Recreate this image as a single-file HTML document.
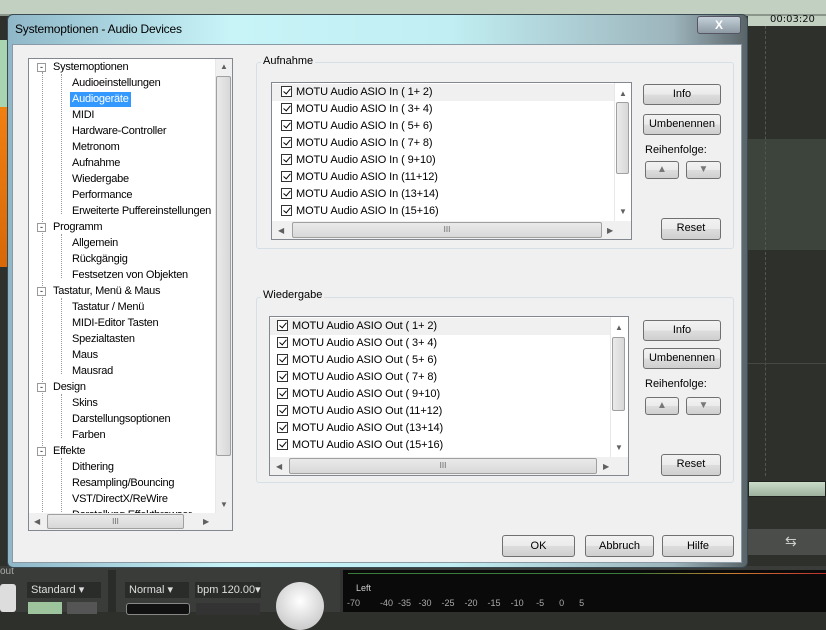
<!DOCTYPE html>
<html><head><meta charset="utf-8">
<style>
*{box-sizing:border-box;margin:0;padding:0}
body{width:826px;height:612px;overflow:hidden;position:relative;background:#2e302c;font-family:"Liberation Sans",sans-serif;font-size:11px;color:#000}
.a{position:absolute}
.btn{position:absolute;border:1px solid #707070;border-radius:3px;background:linear-gradient(#f2f2f2 0%,#ebebeb 50%,#dddddd 51%,#cfcfcf 100%);text-align:center;font-size:11px;line-height:19px;color:#000}
.grp{position:absolute;border:1px solid #d5dfe5;border-radius:3px}
.lbl{position:absolute;background:#f0f0f0;padding:0 2px;font-size:11px}
.lb{position:absolute;border:1px solid #828790;background:#fff;overflow:hidden}
.row{position:absolute;left:0;height:17px;font-size:11px;line-height:17px;white-space:nowrap;letter-spacing:-0.1px}
.cb{display:inline-block;width:11px;height:11px;border:1px solid #333;vertical-align:-2px;margin-right:4px;position:relative;background:#fff}
.cb:after{content:"";position:absolute;left:3px;top:0px;width:3px;height:6px;border:solid #000;border-width:0 1.5px 1.5px 0;transform:rotate(40deg)}
.vs{position:absolute;background:#f0f0f0;border-left:1px solid #e8e8e8}
.thumb{position:absolute;background:linear-gradient(90deg,#eaeaea,#d8d8d8);border:1px solid #a0a0a0;border-radius:2px}
.hthumb{position:absolute;background:linear-gradient(#eaeaea,#d8d8d8);border:1px solid #a0a0a0;border-radius:2px}
.tr{position:absolute;font-size:11px;line-height:15px;white-space:nowrap;letter-spacing:-0.25px}
.arr{font-size:8px;color:#606060;position:absolute}
.dark{color:#ddd}
</style></head><body>
<!-- background DAW -->
<div class="a" style="left:0;top:0;width:826px;height:14px;background:#c2d0c2"></div>
<div class="a" style="left:0;top:14px;width:826px;height:2px;background:#8a968a"></div>
<div class="a" style="left:0;top:40px;width:12px;height:67px;background:#a8d4b0"></div>
<div class="a" style="left:0;top:107px;width:12px;height:160px;background:linear-gradient(#f08010,#d86808)"></div>
<div class="a" style="left:748px;top:16px;width:78px;height:10px;background:#c2d0c2"></div>
<div class="a" style="left:770px;top:14px;font-size:10px;font-family:'DejaVu Sans',sans-serif;color:#111">00:03:20</div>
<div class="a" style="left:748px;top:26px;width:78px;height:113px;background:#2e302c"></div>
<div class="a" style="left:748px;top:139px;width:78px;height:111px;background:#3c443c"></div>
<div class="a" style="left:765px;top:26px;height:450px;border-left:1px dashed #555"></div>
<div class="a" style="left:748px;top:363px;width:78px;height:1px;background:#454845"></div>
<div class="a" style="left:748px;top:481px;width:78px;height:16px;background:linear-gradient(#c8dcc8,#9eb09e);border:1px solid #222"></div>
<div class="a" style="left:748px;top:529px;width:78px;height:26px;background:#4a4d4a"></div>
<div class="a" style="left:785px;top:533px;color:#ccc;font-size:14px">⇆</div>
<div class="a" style="left:0;top:566px;width:826px;height:46px;background:#3a3c3a"></div>
<div class="a" style="left:0;top:566px;font-size:10px;color:#aaa">out</div>
<div class="a" style="left:0;top:584px;width:16px;height:28px;background:#ddd;border-radius:3px"></div>
<div class="a dark" style="left:27px;top:582px;width:74px;height:16px;background:#2a2c2a;font-size:11px;line-height:16px;padding-left:4px">Standard ▾</div>
<div class="a" style="left:28px;top:602px;width:34px;height:12px;background:#9ec49e"></div>
<div class="a" style="left:67px;top:602px;width:30px;height:12px;background:#555"></div>
<div class="a" style="left:108px;top:570px;width:8px;height:42px;background:#2a2c2a"></div>
<div class="a dark" style="left:125px;top:582px;width:64px;height:16px;background:#2a2c2a;line-height:16px;padding-left:4px">Normal ▾</div>
<div class="a dark" style="left:195px;top:582px;width:66px;height:16px;background:#2a2c2a;line-height:16px;padding-left:2px">bpm 120.00▾</div>
<div class="a" style="left:126px;top:603px;width:64px;height:12px;background:#111;border:1px solid #888;border-radius:3px"></div>
<div class="a" style="left:196px;top:603px;width:64px;height:12px;background:#333"></div>
<div class="a" style="left:276px;top:582px;width:48px;height:48px;border-radius:50%;background:radial-gradient(circle at 50% 40%,#fff,#bbb)"></div>
<div class="a" style="left:340px;top:570px;width:486px;height:42px;background:#0a0a0a;border-left:3px solid #333"></div>
<div class="a" style="left:348px;top:573px;width:478px;height:1px;background:linear-gradient(90deg,#3a7a3a 60%,#c88030 80%,#c03030)"></div>
<div class="a" style="left:356px;top:583px;font-size:9px;color:#ccc">Left</div>
<div class="a" style="left:347px;top:598px;font-size:9px;color:#aaa;white-space:pre">-70        -40  -35   -30    -25    -20    -15    -10     -5      0      5</div>

<!-- window frame -->
<div class="a" style="left:7px;top:14px;width:741px;height:554px;border-radius:6px;background:linear-gradient(90deg,#8fb7c8,#c8f4f8 30%,#c0eef2 60%,#9db4bc 90%,#5a6468);border:1px solid #3a4a52"></div>
<div class="a" style="left:15px;top:22px;font-size:12px;color:#000;letter-spacing:-0.2px">Systemoptionen - Audio Devices</div>
<div class="a" style="left:697px;top:16px;width:44px;height:18px;border:1px solid #556;border-radius:3px;background:linear-gradient(#c4d0d8,#8d9aa4);color:#fff;text-align:center;font-weight:bold;font-size:12px;line-height:16px">X</div>
<div class="a" style="left:12px;top:44px;width:730px;height:519px;background:#f0f0f0;border:1px solid #8a9aa4"></div>

<!-- tree -->
<div class="a" style="left:28px;top:58px;width:205px;height:473px;background:#fff;border:1px solid #828790"></div>
<div class="a" style="left:42px;top:72px;height:440px;border-left:1px dotted #999"></div>
<div class="a" style="left:61px;top:74px;height:140px;border-left:1px dotted #999"></div>
<div class="a" style="left:61px;top:234px;height:44px;border-left:1px dotted #999"></div>
<div class="a" style="left:61px;top:298px;height:76px;border-left:1px dotted #999"></div>
<div class="a" style="left:61px;top:394px;height:44px;border-left:1px dotted #999"></div>
<div class="a" style="left:61px;top:458px;height:56px;border-left:1px dotted #999"></div>
<div class="a" style="left:37px;top:63px;width:9px;height:9px;border:1px solid #999;background:#fff;font-size:9px;line-height:6px;text-align:center">-</div>
<div class="a" style="left:37px;top:223px;width:9px;height:9px;border:1px solid #999;background:#fff;font-size:9px;line-height:6px;text-align:center">-</div>
<div class="a" style="left:37px;top:287px;width:9px;height:9px;border:1px solid #999;background:#fff;font-size:9px;line-height:6px;text-align:center">-</div>
<div class="a" style="left:37px;top:383px;width:9px;height:9px;border:1px solid #999;background:#fff;font-size:9px;line-height:6px;text-align:center">-</div>
<div class="a" style="left:37px;top:447px;width:9px;height:9px;border:1px solid #999;background:#fff;font-size:9px;line-height:6px;text-align:center">-</div>
<div class="tr" style="left:53px;top:60px">Systemoptionen</div>
<div class="tr" style="left:72px;top:76px">Audioeinstellungen</div>
<div class="tr" style="left:70px;top:92px;background:#3399ff;color:#fff;padding:0 2px">Audiogeräte</div>
<div class="tr" style="left:72px;top:108px">MIDI</div>
<div class="tr" style="left:72px;top:124px">Hardware-Controller</div>
<div class="tr" style="left:72px;top:140px">Metronom</div>
<div class="tr" style="left:72px;top:156px">Aufnahme</div>
<div class="tr" style="left:72px;top:172px">Wiedergabe</div>
<div class="tr" style="left:72px;top:188px">Performance</div>
<div class="tr" style="left:72px;top:204px">Erweiterte Puffereinstellungen</div>
<div class="tr" style="left:53px;top:220px">Programm</div>
<div class="tr" style="left:72px;top:236px">Allgemein</div>
<div class="tr" style="left:72px;top:252px">Rückgängig</div>
<div class="tr" style="left:72px;top:268px">Festsetzen von Objekten</div>
<div class="tr" style="left:53px;top:284px">Tastatur, Menü &amp; Maus</div>
<div class="tr" style="left:72px;top:300px">Tastatur / Menü</div>
<div class="tr" style="left:72px;top:316px">MIDI-Editor Tasten</div>
<div class="tr" style="left:72px;top:332px">Spezialtasten</div>
<div class="tr" style="left:72px;top:348px">Maus</div>
<div class="tr" style="left:72px;top:364px">Mausrad</div>
<div class="tr" style="left:53px;top:380px">Design</div>
<div class="tr" style="left:72px;top:396px">Skins</div>
<div class="tr" style="left:72px;top:412px">Darstellungsoptionen</div>
<div class="tr" style="left:72px;top:428px">Farben</div>
<div class="tr" style="left:53px;top:444px">Effekte</div>
<div class="tr" style="left:72px;top:460px">Dithering</div>
<div class="tr" style="left:72px;top:476px">Resampling/Bouncing</div>
<div class="tr" style="left:72px;top:492px">VST/DirectX/ReWire</div>
<div class="tr" style="left:72px;top:508px;height:5px;overflow:hidden">Darstellung Effektbrowser</div>
<div class="vs" style="left:215px;top:59px;width:17px;height:455px"></div>
<div class="arr" style="left:220px;top:62px">▲</div>
<div class="thumb" style="left:216px;top:76px;width:15px;height:380px"></div>
<div class="arr" style="left:220px;top:500px">▼</div>
<div class="a" style="left:29px;top:513px;width:203px;height:17px;background:#f0f0f0"></div>
<div class="arr" style="left:34px;top:517px">◀</div>
<div class="hthumb" style="left:47px;top:514px;width:137px;height:15px;font-size:8px;text-align:center;line-height:13px;color:#666">III</div>
<div class="arr" style="left:203px;top:517px">▶</div>

<!-- Aufnahme -->
<div class="grp" style="left:256px;top:62px;width:478px;height:187px"></div>
<div class="lbl" style="left:261px;top:55px">Aufnahme</div>
<div class="lb" style="left:271px;top:82px;width:361px;height:158px">
<div class="row" style="top:1px;width:342px;background:#f0f0f0;padding-left:9px"><span class="cb"></span>MOTU Audio ASIO In ( 1+ 2)</div>
<div class="row" style="top:18px;padding-left:9px"><span class="cb"></span>MOTU Audio ASIO In ( 3+ 4)</div>
<div class="row" style="top:35px;padding-left:9px"><span class="cb"></span>MOTU Audio ASIO In ( 5+ 6)</div>
<div class="row" style="top:52px;padding-left:9px"><span class="cb"></span>MOTU Audio ASIO In ( 7+ 8)</div>
<div class="row" style="top:69px;padding-left:9px"><span class="cb"></span>MOTU Audio ASIO In ( 9+10)</div>
<div class="row" style="top:86px;padding-left:9px"><span class="cb"></span>MOTU Audio ASIO In (11+12)</div>
<div class="row" style="top:103px;padding-left:9px"><span class="cb"></span>MOTU Audio ASIO In (13+14)</div>
<div class="row" style="top:120px;padding-left:9px"><span class="cb"></span>MOTU Audio ASIO In (15+16)</div>
<div class="vs" style="left:342px;top:0;width:17px;height:138px;background:#fff"></div>
<div class="arr" style="left:347px;top:6px">▲</div>
<div class="thumb" style="left:344px;top:19px;width:13px;height:72px"></div>
<div class="arr" style="left:347px;top:124px">▼</div>
<div class="a" style="left:0;top:138px;width:359px;height:18px;background:#f0f0f0"></div>
<div class="arr" style="left:6px;top:143px">◀</div>
<div class="hthumb" style="left:20px;top:139px;width:310px;height:16px;font-size:8px;text-align:center;line-height:14px;color:#666">III</div>
<div class="arr" style="left:335px;top:143px">▶</div>
</div>
<div class="btn" style="left:643px;top:84px;width:78px;height:21px">Info</div>
<div class="btn" style="left:643px;top:114px;width:78px;height:21px">Umbenennen</div>
<div class="a" style="left:645px;top:144px">Reihenfolge:</div>
<div class="btn" style="left:645px;top:161px;width:34px;height:18px;line-height:15px;color:#777;font-size:10px">▲</div>
<div class="btn" style="left:686px;top:161px;width:35px;height:18px;line-height:15px;color:#777;font-size:10px">▼</div>
<div class="btn" style="left:661px;top:218px;width:60px;height:22px">Reset</div>

<!-- Wiedergabe -->
<div class="grp" style="left:256px;top:297px;width:478px;height:186px"></div>
<div class="lbl" style="left:261px;top:289px">Wiedergabe</div>
<div class="lb" style="left:269px;top:316px;width:360px;height:160px">
<div class="row" style="top:1px;width:340px;background:#f0f0f0;padding-left:7px"><span class="cb"></span>MOTU Audio ASIO Out ( 1+ 2)</div>
<div class="row" style="top:18px;padding-left:7px"><span class="cb"></span>MOTU Audio ASIO Out ( 3+ 4)</div>
<div class="row" style="top:35px;padding-left:7px"><span class="cb"></span>MOTU Audio ASIO Out ( 5+ 6)</div>
<div class="row" style="top:52px;padding-left:7px"><span class="cb"></span>MOTU Audio ASIO Out ( 7+ 8)</div>
<div class="row" style="top:69px;padding-left:7px"><span class="cb"></span>MOTU Audio ASIO Out ( 9+10)</div>
<div class="row" style="top:86px;padding-left:7px"><span class="cb"></span>MOTU Audio ASIO Out (11+12)</div>
<div class="row" style="top:103px;padding-left:7px"><span class="cb"></span>MOTU Audio ASIO Out (13+14)</div>
<div class="row" style="top:120px;padding-left:7px"><span class="cb"></span>MOTU Audio ASIO Out (15+16)</div>
<div class="vs" style="left:340px;top:0;width:18px;height:140px;background:#fff"></div>
<div class="arr" style="left:345px;top:6px">▲</div>
<div class="thumb" style="left:342px;top:20px;width:13px;height:74px"></div>
<div class="arr" style="left:345px;top:126px">▼</div>
<div class="a" style="left:0;top:140px;width:358px;height:18px;background:#f0f0f0"></div>
<div class="arr" style="left:6px;top:145px">◀</div>
<div class="hthumb" style="left:19px;top:141px;width:308px;height:16px;font-size:8px;text-align:center;line-height:14px;color:#666">III</div>
<div class="arr" style="left:333px;top:145px">▶</div>
</div>
<div class="btn" style="left:643px;top:320px;width:78px;height:21px">Info</div>
<div class="btn" style="left:643px;top:348px;width:78px;height:21px">Umbenennen</div>
<div class="a" style="left:645px;top:378px">Reihenfolge:</div>
<div class="btn" style="left:645px;top:397px;width:34px;height:18px;line-height:15px;color:#777;font-size:10px">▲</div>
<div class="btn" style="left:686px;top:397px;width:35px;height:18px;line-height:15px;color:#777;font-size:10px">▼</div>
<div class="btn" style="left:661px;top:454px;width:60px;height:22px">Reset</div>

<!-- bottom buttons -->
<div class="btn" style="left:502px;top:535px;width:73px;height:22px;line-height:20px">OK</div>
<div class="btn" style="left:585px;top:535px;width:69px;height:22px;line-height:20px">Abbruch</div>
<div class="btn" style="left:662px;top:535px;width:72px;height:22px;line-height:20px">Hilfe</div>
</body></html>
